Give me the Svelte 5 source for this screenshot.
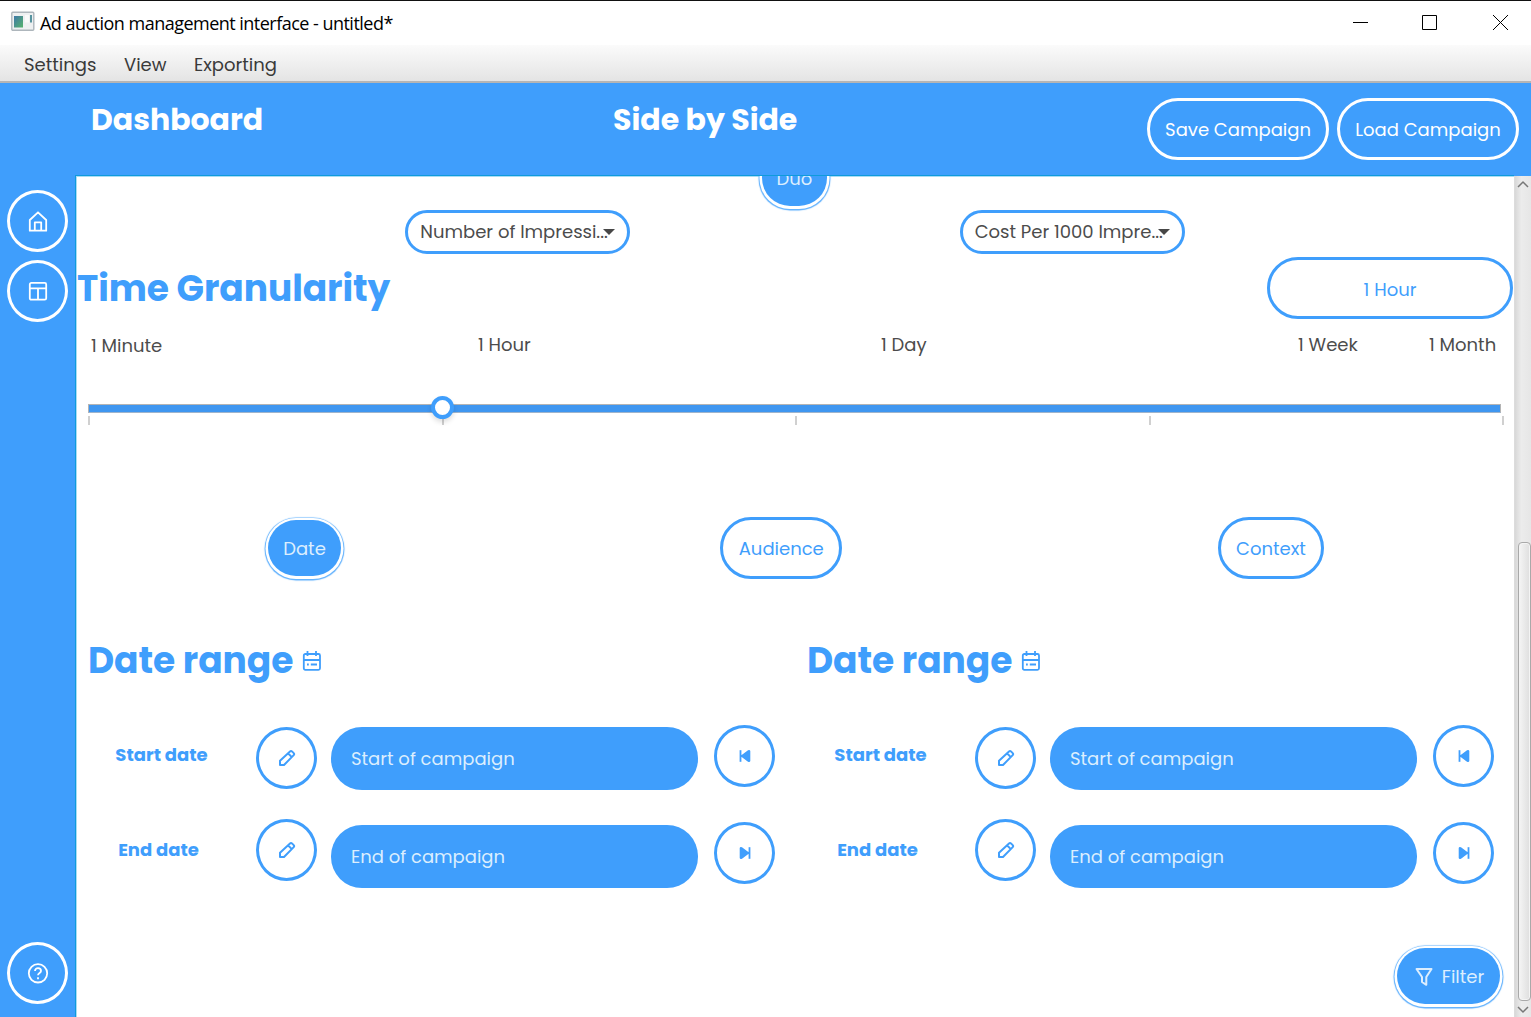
<script>
  const menus = [
    { name: 'Settings', cls: 'm-settings' },
    { name: 'View', cls: 'm-view' },
    { name: 'Exporting', cls: 'm-exporting' }
  ];
  const metrics = ['Number of Impressi...', 'Cost Per 1000 Impre...'];
  const steps = ['1 Minute', '1 Hour', '1 Day', '1 Week', '1 Month'];
  const selected = 1;
  const panels = ['left', 'right'];
</script>

{#snippet pencil()}
  <svg class="pencil" viewBox="0 0 18 18" width="18" height="18">
    <path d="M2 16v-4.2L12 2.4q1-.9 2 0l1.7 1.7q1 1 0 2L6 16ZM10 4.3l3.8 3.8" />
  </svg>
{/snippet}

{#snippet skip(forward)}
  <svg class="skip" class:forward viewBox="0 0 12 14" width="12" height="14">
    <path class="bar" d="M1.500 1.200v11.600" />
    <path class="tri" d="M11.300 2v10q-.3 1.500-2.300.8L3 8.200 2 8V6l1-.2 6-4.600q2-.7 2.300.8Z" />
  </svg>
{/snippet}

<div class="window">
  <div class="titlebar">
    <svg class="appicon" width="24" height="20" viewBox="0 0 24 20">
      <defs>
        <linearGradient id="pane" x1="0" y1="0" x2="1" y2="1">
          <stop offset="0" stop-color="#3f78a8" /><stop offset="1" stop-color="#57b36c" />
        </linearGradient>
      </defs>
      <rect x=".8" y="1.300" width="22" height="18" rx="1" fill="#eef0f1" stroke="#aeb6bc" stroke-width="1.4" />
      <rect x="3" y="5" width="9" height="11.500" fill="url(#pane)" />
      <rect x="14" y="4" width="4" height="7.5" fill="#fafafa" />
      <rect x="19" y="4" width="2" height="7.5" fill="#5794a0" />
    </svg>
    <span class="wintitle">Ad auction management interface - untitled*</span>
    <svg class="controls" width="156" height="17" viewBox="0 0 156 17">
      <path d="M0 8.5h15M69.500 1.500h14v14h-14z" />
      <path d="M140 1l15 15M155 1l-15 15" />
    </svg>
  </div>

  <nav class="menubar">
    {#each menus as m}<span class={m.cls}>{m.name}</span>{/each}
  </nav>

  <header>
    <h1 class="dash">Dashboard</h1>
    <h1 class="side">Side by Side</h1>
    <div class="campaigns">
      <button>Save Campaign</button>
      <button>Load Campaign</button>
    </div>
  </header>

  <div class="body">
    <aside>
      <button class="round" aria-label="Home">
        <svg width="20" height="22" viewBox="0 0 20 22"><path d="M1.800 20.700V10L10 2.300l8.200 7.700v10.700ZM6.800 20.500V12.300h6.400V20.500" /></svg>
      </button>
      <button class="round" aria-label="Layout">
        <svg width="20" height="20" viewBox="0 0 20 20"><rect x="1.800" y="1.900" width="16.400" height="16.800" rx="1.500" /><path d="M2 7.300h16M10 7.300v11" /></svg>
      </button>
      <button class="round help" aria-label="Help">
        <svg width="22" height="22" viewBox="0 0 22 22"><circle cx="11" cy="11.300" r="9.200" /><path d="M8 9c0-3.800 6-3.800 6 0 0 2-3 2-3 4.300M11 15.200v2" /></svg>
      </button>
    </aside>

    <main>
      <div class="modes"><button class="on duo">Duo</button></div>

      <div class="metrics">
        {#each metrics as m}
          <div class="select"><span>{m}</span><i></i></div>
        {/each}
      </div>

      <div class="granularity">
        <h2>Time Granularity</h2>
        <button class="outline current">1 Hour</button>
      </div>

      <div class="steps">
        {#each steps as s}<span>{s}</span>{/each}
      </div>
      <div class="slider">
        <div class="track"></div>
        <div class="ticks">{#each steps as s, i}<i>{#if i === selected}<b></b>{/if}</i>{/each}</div>
      </div>

      <div class="tabs">
        <button class="on date">Date</button>
        <button class="outline audience">Audience</button>
        <button class="outline context">Context</button>
      </div>

      <div class="panels">
        {#each panels as p}
          <section>
            <div class="heading">
              <h2>Date range</h2>
              <svg width="20" height="22" viewBox="0 0 20 22">
                <rect x="1.800" y="4" width="16.200" height="15.800" rx="1.500" />
                <path d="M5.500 1v5M14 1v5M2 10h16M5 14.500h1.800M8.800 14.500H15" />
              </svg>
            </div>
            <div class="row start">
              <strong>Start date</strong>
              <button class="circle">{@render pencil()}</button>
              <div class="field">Start of campaign</div>
              <button class="circle jump">{@render skip(false)}</button>
            </div>
            <div class="row end">
              <strong>End date</strong>
              <button class="circle">{@render pencil()}</button>
              <div class="field">End of campaign</div>
              <button class="circle jump">{@render skip(true)}</button>
            </div>
          </section>
        {/each}
      </div>

      <div class="actions">
        <button class="on filter">
          <svg width="18" height="20" viewBox="0 0 18 20"><path d="M1.500 2h15l-5.200 8v7.800L7 15v-5Z" /></svg>
          <span>Filter</span>
        </button>
      </div>
    </main>

    <div class="scrollbar">
      <svg width="12" height="8" viewBox="0 0 12 8"><path d="M1 7l5-5 5 5" /></svg>
      <div class="thumb"></div>
      <svg width="12" height="8" viewBox="0 0 12 8"><path d="M1 1l5 5 5-5" /></svg>
    </div>
  </div>
</div>

<style>
  :global(body) { margin: 0; }
  * { box-sizing: border-box; }
  .window {
    width: 1531px; height: 1017px; overflow: hidden; display: flex; flex-direction: column;
    background: #fff; border-top: 1px solid #111; white-space: nowrap;
    font: 18px/24px Poppins, Inter, sans-serif; color: #4c4c4c;
  }
  button {
    font: inherit; color: inherit; background: none; border: 0; padding: 0;
    display: flex; align-items: center; justify-content: center; flex: none;
  }
  svg { flex: none; fill: none; stroke: currentColor; stroke-width: 1.8; stroke-linejoin: round; display: block; }
  h1, h2 { margin: 0; font-weight: 700; }

  .titlebar { height: 44px; flex: none; display: flex; align-items: center; padding: 0 22px 0 11px; color: #000; }
  .appicon { stroke: none; margin-top: -4px; }
  .wintitle { font: 18px/24px "Segoe UI", "Open Sans", sans-serif; margin-left: 5px; letter-spacing: -0.52px; }
  .controls { margin-left: auto; stroke-width: 1; margin-top: -1px; }

  .menubar {
    height: 38px; flex: none; display: flex; padding: 8px 0 0 24px;
    background: linear-gradient(#fbfbfb, #e4e4e4); border-bottom: 2px solid #b5b5b5; color: #3a3a3a;
  }
  .m-settings { width: 100px; }
  .m-view { width: 70px; }

  header { height: 92px; flex: none; display: flex; background: #3f9efc; color: #fff; padding: 15px 12px 0 91px; }
  h1 { font-size: 30px; line-height: 42px; padding-top: 1px; }
  .dash { width: 522px; }
  .campaigns { margin-left: auto; display: flex; gap: 8px; }
  .campaigns button { width: 182px; height: 62px; border: 3px solid #fff; border-radius: 31px; padding-top: 1px; }

  .body { flex: 1; min-height: 0; display: flex; background: #3f9efc; }
  aside { width: 75px; display: flex; flex-direction: column; gap: 8px; padding: 15px 0 13px 7px; color: #fff; }
  .round { width: 61px; height: 62px; border: 3px solid #fff; border-radius: 50%; }
  .help { margin-top: auto; }

  main {
    width: 1439px; background: #fff; overflow: hidden; display: flex; flex-direction: column;
    border-top: 1px solid #0f9bdc; border-left: 1px solid #0f9bdc; box-shadow: inset 1px 1px 0 #a9dcf5;
  }
  .modes { display: flex; justify-content: center; margin: -26px 1px 0 0; flex: none; }
  .on {
    color: #dceefe; background: #3f9efc; border-radius: 31px; height: 56px;
    box-shadow: 0 .5px 0 2.500px #fff, 0 1px 1px 3.500px #5fb0fd;
  }
  .duo { width: 65px; height: 56px; padding-top: 2px; margin-bottom: 1px; }
  .outline { color: #3f9efc; border: 3px solid #3f9efc; border-radius: 31px; height: 62px; }

  .metrics { display: flex; justify-content: space-evenly; margin-top: 2.500px; margin-bottom: .5px; }
  .select {
    width: 225px; height: 44px; border: 3px solid #3f9efc; border-radius: 22px;
    display: flex; align-items: center; padding: 1px 0 0 12px;
  }
  .select i { border: 6px solid transparent; border-top-color: #474747; border-bottom: 0; margin-left: -5px; }

  .granularity { height: 66px; display: flex; justify-content: space-between; padding: 3px 1px 0 1px; }
  h2 { color: #3f9efc; font-size: 36px; line-height: 46px; letter-spacing: -0.05px; }
  .granularity h2 { margin-top: 9px; }
  .current { width: 246px; padding-top: 3px; }

  .steps { display: grid; grid-template-columns: 387px 403px 417px 131px 1fr; margin: 13px 0 0 15px; }
  .steps span:first-child { padding-top: 1px; }
  .slider { padding: 46px 13px 0 12px; }
  .track { height: 9px; background: #3f96f0; border: 1px solid #b4b4b4; border-bottom-color: #9fb4cc; }
  .ticks { display: flex; justify-content: space-between; padding-top: 3px; margin-right: -3px; }
  .ticks i { width: 2px; height: 9px; background: #d0d0d0; position: relative; }
  .ticks b {
    position: absolute; left: -11px; top: -20px; width: 23px; height: 23px; border: 4.500px solid #3f9efc;
    border-radius: 50%; background: #fff; box-shadow: 0 3px 5px rgba(0, 0, 0, .13);
  }

  .tabs { display: flex; justify-content: space-between; align-items: center; margin-top: 92px; padding: 0 190px 0 192px; }
  .date { width: 73px; margin-right: 3.500px; padding-top: 1px; }
  .audience { width: 122px; padding-top: 1px; }
  .context { width: 106px; padding-top: 1px; }

  .panels { display: grid; grid-template-columns: 719px 719px; margin-top: 58px; }
  section { padding-left: 12px; }
  .heading { display: flex; align-items: center; height: 48px; color: #3f9efc; }
  .heading svg { margin: -1px 0 0 10px; }
  .heading h2 { width: 204px; }
  .row { display: flex; align-items: flex-start; color: #3f9efc; }
  .row strong { width: 147px; margin-right: 21px; text-align: center; font-size: 18px; }
  .circle { width: 61px; height: 62px; border: 3px solid #3f9efc; border-radius: 50%; }
  .field { width: 367px; height: 63px; margin-left: 14px; border-radius: 31px; background: #3f9efc; color: #dceefe; padding: 20px; }
  .jump { margin-left: 16px; }
  .start { padding-top: 40px; height: 135px; margin-top: -1px; }
  .start strong { margin-top: 19px; }
  .start .circle, .start .field { margin-top: 3px; }
  .start .jump { margin-top: 1px; }
  .end strong { margin-top: 19px; margin-left: -3px; margin-right: 24px; }
  .end .field { margin-top: 6px; }
  .end .jump { margin-top: 3px; }
  .pencil { stroke-width: 2; }
  .bar { stroke-width: 1.800; }
  .tri { fill: currentColor; stroke: none; }
  .forward { transform: scaleX(-1); }

  .actions { display: flex; justify-content: flex-end; padding: 60px 14px 0 0; }
  .filter { width: 103px; gap: 9px; padding: 1px 0 0 2px; }
  .filter svg { stroke-width: 2; }

  .scrollbar {
    width: 17px; background: linear-gradient(90deg, #d8d8d8, #ececec 40%, #e6e6e6); color: #777;
    border-left: 1px solid #dcdcdc; margin-top: 1px; display: flex; flex-direction: column; align-items: center; padding: 4px 0 3px 1px;
  }
  .scrollbar svg { stroke-width: 1.500; margin-right: 1px; }
  .thumb {
    width: 13px; height: 459px; margin: auto 0 5px 1px; border: 1px solid #a9a9a9; border-radius: 4px;
    background: linear-gradient(90deg, #f5f5f5, #dedede); box-shadow: inset 0 0 0 1px #f4f4f4;
  }
</style>
